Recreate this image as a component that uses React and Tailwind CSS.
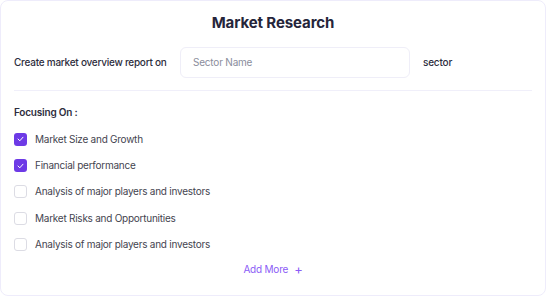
import React from "react";

const items = [
  { label: "Market Size and Growth", checked: true },
  { label: "Financial performance", checked: true },
  { label: "Analysis of major players and investors", checked: false },
  { label: "Market Risks and Opportunities", checked: false },
  { label: "Analysis of major players and investors", checked: false },
];

function Box({ checked }) {
  return checked ? (
    <span className="flex h-[13px] w-[13px] shrink-0 items-center justify-center rounded-[3px] bg-[#6d3ae6]">
      <svg width="7" height="6" viewBox="0 0 7 6" fill="none">
        <path d="M1 3l1.8 1.8L6 1.2" stroke="#fff" strokeWidth="1" strokeLinecap="round" strokeLinejoin="round" />
      </svg>
    </span>
  ) : (
    <span className="h-[13px] w-[13px] shrink-0 rounded-[3px] border border-[#dcdce4] bg-white" />
  );
}

export default function App() {
  return (
    <div className="h-[296px] w-[546px] bg-white" style={{ fontFamily: "Inter, 'Noto Sans', sans-serif" }}>
      <div className="flex h-[296px] w-[546px] flex-col rounded-[8px] border border-[#eeecfb] px-[13px]">
        <h1 className="mt-[12px] text-center text-[15px] font-bold leading-[20px] tracking-[-0.1px] text-[#25253a]">Market Research</h1>
        <div className="mt-[14px] flex items-center">
          <span className="w-[166px] whitespace-nowrap text-[10px] font-medium tracking-[-0.25px] text-[#2d2d3d]">Create market overview report on</span>
          <div className="flex h-[31px] w-[230px] items-center rounded-[6px] border border-[#efeef8] px-[12px] text-[10px] tracking-[-0.2px] text-[#8a8d9c]">Sector Name</div>
          <span className="ml-[13px] text-[10px] font-medium tracking-[-0.2px] text-[#2d2d3d]">sector</span>
        </div>
        <div className="mt-[12px] h-px bg-[#f0effa]" />
        <div className="mt-[14px] text-[10px] font-semibold leading-[14px] tracking-[-0.2px] text-[#2d2d3d]">Focusing On :</div>
        <div className="mt-[7px] flex flex-col">
          {items.map((it, i) => (
            <div key={i} className="flex h-[26.4px] items-center gap-[8px]">
              <Box checked={it.checked} />
              <span className="text-[10px] tracking-[-0.25px] text-[#44444f]">{it.label}</span>
            </div>
          ))}
        </div>
        <div className="mt-[4px] flex items-center justify-center gap-[6px] text-[10px] tracking-[-0.2px] text-[#8b5cf6]">
          <span>Add More</span>
          <span className="text-[13px] leading-none">+</span>
        </div>
      </div>
    </div>
  );
}
